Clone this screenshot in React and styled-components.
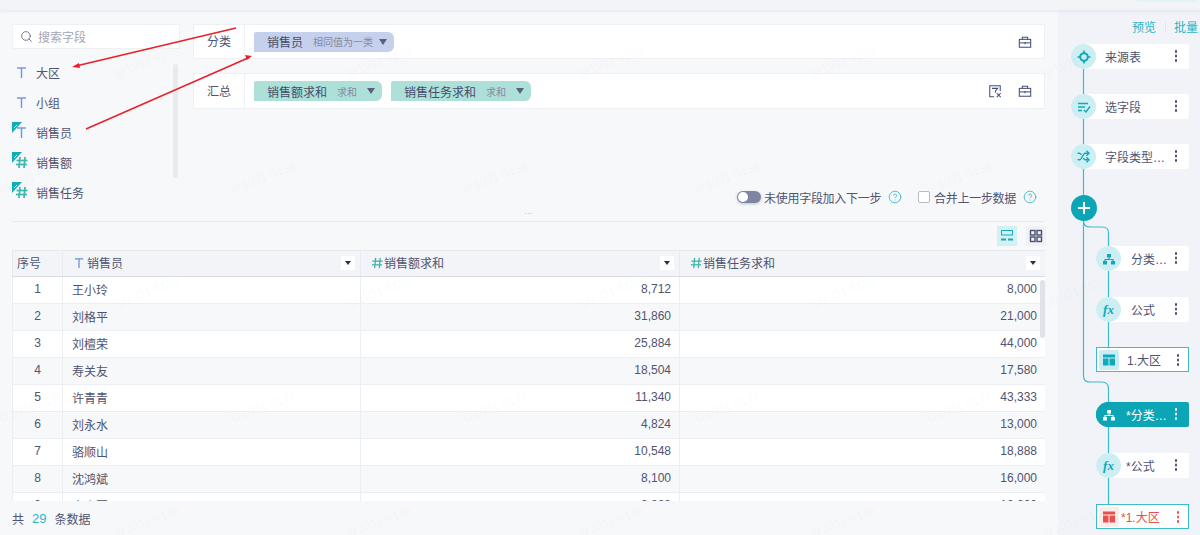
import React from "react";
import styled, { createGlobalStyle } from "styled-components";
import { Search, Shuffle, CircleHelp } from "lucide-react";

const rows = [
  ["王小玲", "8,712", "8,000"],
  ["刘格平", "31,860", "21,000"],
  ["刘檀荣", "25,884", "44,000"],
  ["寿关友", "18,504", "17,580"],
  ["许青青", "11,340", "43,333"],
  ["刘永水", "4,824", "13,000"],
  ["骆顺山", "10,548", "18,888"],
  ["沈鸿斌", "8,100", "16,000"],
  ["李小军", "9,260", "12,000"],
];

const watermarks = [];
[62, 177, 292, 407, 522].forEach((top, i) => {
  for (let k = 0; k < 6; k++) {
    const left = (i % 2 === 0 ? 147 : 31) + 232 * k;
    if (left < 1170) watermarks.push({ top, left });
  }
});

const TypeT = () => (
  <>
    <line x1="5" y1="6" x2="14" y2="6" />
    <line x1="9.5" y1="6" x2="9.5" y2="16" />
  </>
);

const TypeHash = () => (
  <>
    <line x1="8" y1="5" x2="7" y2="16" />
    <line x1="13" y1="5" x2="12" y2="16" />
    <line x1="4.5" y1="8.5" x2="15.5" y2="8.5" />
    <line x1="4" y1="12.5" x2="15" y2="12.5" />
  </>
);

const FieldIcon = ({ hash, marked }) => (
  <FieldSvg viewBox="0 0 18 20" $hash={hash}>
    {hash ? <TypeHash /> : <TypeT />}
    {marked && (
      <>
        <path d="M0 0H10L0 11Z" fill="#10aebb" stroke="none" />
        <line x1="2" y1="6" x2="5" y2="3" stroke="#fff" strokeWidth="1" />
      </>
    )}
  </FieldSvg>
);

const HeadIcon = ({ hash }) => (
  <HeadSvg viewBox="3 4 13 13" $hash={hash}>
    {hash ? <TypeHash /> : <TypeT />}
  </HeadSvg>
);

const BoxIcon = () => (
  <ActionSvg viewBox="0 0 16 16">
    <rect x="1.5" y="5" width="13" height="9" />
    <path d="M5 5V2.5H11V5" />
    <line x1="1.5" y1="9" x2="14.5" y2="9" />
    <line x1="8" y1="8" x2="8" y2="10.5" />
  </ActionSvg>
);

const FilterIcon = () => (
  <ActionSvg viewBox="0 0 16 16">
    <path d="M7 14.5H2V2H14V8" />
    <path d="M4.5 5H11L8.5 8V10" />
    <path d="M10 10.5L14.5 15M14.5 10.5L10 15" />
  </ActionSvg>
);

const SourceIcon = () => (
  <NodeSvg viewBox="0 0 14 14">
    <circle cx="7" cy="7" r="3.8" strokeWidth="2" />
    <path d="M7 0.5V3M7 11V13.5M0.5 7H3M11 7H13.5" strokeWidth="1.6" />
  </NodeSvg>
);

const PickIcon = () => (
  <NodeSvg viewBox="0 0 14 14">
    <path d="M1 3.5H11M1 7H8M1 10.5H5" strokeWidth="1.3" />
    <path d="M7 10L9 12L13 6.5" strokeWidth="1.4" />
  </NodeSvg>
);

const GroupIcon = ({ light }) => (
  <NodeSvg viewBox="0 0 14 14" $light={light}>
    <rect x="5" y="2" width="4" height="3.5" fill="currentColor" stroke="none" />
    <rect x="1" y="9" width="4" height="3.5" fill="currentColor" stroke="none" />
    <rect x="9" y="9" width="4" height="3.5" fill="currentColor" stroke="none" />
    <path d="M7 5.5V7.5M3 9V7.5H11V9" strokeWidth="1.1" />
  </NodeSvg>
);

const TableIcon = () => (
  <svg viewBox="0 0 14 14" width="14" height="14">
    <path d="M1 1.5H13V4.5H1ZM1 5.5H6.5V12.5H1ZM7.5 5.5H13V12.5H7.5Z" fill="currentColor" />
  </svg>
);

const Node = ({ icon, label, gap, nested, active, narrow }) => (
  <NodeRow $gap={gap} $nested={nested} $active={active}>
    <NodeCircle $active={active}>{icon}</NodeCircle>
    <NodeLabel $nested={nested} $active={active} $narrow={narrow}>
      {label}
    </NodeLabel>
    <MoreDots $active={active} />
  </NodeRow>
);

const ResultNode = ({ label, gap, red }) => (
  <ResultRow $gap={gap}>
    <ResultThumb $red={red}>
      <TableIcon />
    </ResultThumb>
    <ResultLabel $red={red}>{label}</ResultLabel>
    <MoreDots $red={red} $result />
  </ResultRow>
);

export default function App() {
  return (
    <Page>
      <GlobalStyle />
      <TopBar>
        <TopTab />
      </TopBar>
      <Main>
        <Editor>
          <TopArea>
            <FieldPane>
              <SearchBox>
                <Search size={13} strokeWidth={1.5} color="#5d6278" />
                <span>搜索字段</span>
              </SearchBox>
              <FieldList>
                <FieldRow><FieldIcon />大区</FieldRow>
                <FieldRow><FieldIcon />小组</FieldRow>
                <FieldRow><FieldIcon marked />销售员</FieldRow>
                <FieldRow><FieldIcon hash marked />销售额</FieldRow>
                <FieldRow><FieldIcon hash marked />销售任务</FieldRow>
                <FieldScroll />
              </FieldList>
            </FieldPane>
            <ConfigPane>
              <ConfigRow $short>
                <ConfigLabel>分类</ConfigLabel>
                <ConfigBody>
                  <Pill $blue>
                    销售员<PillSub>相同值为一类</PillSub>
                    <PillCaret $tight />
                  </Pill>
                </ConfigBody>
                <ConfigActions>
                  <BoxIcon />
                </ConfigActions>
              </ConfigRow>
              <ConfigRow>
                <ConfigLabel>汇总</ConfigLabel>
                <ConfigBody>
                  <Pill>
                    销售额求和<PillSub>求和</PillSub>
                    <PillCaret />
                  </Pill>
                  <Pill>
                    销售任务求和<PillSub>求和</PillSub>
                    <PillCaret />
                  </Pill>
                </ConfigBody>
                <ConfigActions>
                  <FilterIcon />
                  <BoxIcon />
                </ConfigActions>
              </ConfigRow>
              <Options>
                <Toggle />
                <OptionText>未使用字段加入下一步</OptionText>
                <HelpIcon size={14} strokeWidth={1.4} />
                <CheckBox />
                <OptionText>合并上一步数据</OptionText>
                <HelpIcon size={14} strokeWidth={1.4} />
              </Options>
            </ConfigPane>
          </TopArea>
          <Grip>···</Grip>
          <ViewBar>
            <ViewButton $active>
              <svg viewBox="0 0 14 14" width="14" height="14" fill="none" stroke="#10aebb">
                <rect x="1.5" y="1.5" width="11" height="4.5" />
                <path d="M1 10.5H6M8 10.5H13" strokeWidth="2" />
              </svg>
            </ViewButton>
            <ViewButton>
              <svg viewBox="0 0 14 14" width="14" height="14" fill="none" stroke="#4a5072" strokeWidth="1.4">
                <rect x="1.5" y="1.5" width="4.5" height="4.5" />
                <rect x="8" y="1.5" width="4.5" height="4.5" />
                <rect x="1.5" y="8" width="4.5" height="4.5" />
                <rect x="8" y="8" width="4.5" height="4.5" />
              </svg>
            </ViewButton>
          </ViewBar>
          <TableWrap>
            <DataTable>
              <colgroup>
                <col width="50" />
                <col width="298" />
                <col width="319" />
                <col width="366" />
              </colgroup>
              <thead>
                <tr>
                  <IndexHead>序号</IndexHead>
                  <HeadCell>
                    <HeadInner>
                      <HeadIcon />
                      销售员
                      <HeadMenu />
                    </HeadInner>
                  </HeadCell>
                  <HeadCell>
                    <HeadInner>
                      <HeadIcon hash />
                      销售额求和
                      <HeadMenu />
                    </HeadInner>
                  </HeadCell>
                  <HeadCell>
                    <HeadInner>
                      <HeadIcon hash />
                      销售任务求和
                      <HeadMenu />
                    </HeadInner>
                  </HeadCell>
                </tr>
              </thead>
              <tbody>
                {rows.map((row, i) => (
                  <BodyRow key={row[0]}>
                    <IndexCell>{i + 1}</IndexCell>
                    <TextCell>{row[0]}</TextCell>
                    <NumberCell>{row[1]}</NumberCell>
                    <NumberCell>{row[2]}</NumberCell>
                  </BodyRow>
                ))}
              </tbody>
            </DataTable>
            <TableScroll />
          </TableWrap>
          <Footer>
            共<Count>29</Count>条数据
          </Footer>
        </Editor>
        <FlowPanel>
          <FlowLines viewBox="1058 10 142 525">
            <path d="M1083.5 69V195M1083.5 221V376Q1083.5 382 1090 382H1102Q1108.5 382 1108.5 389V402" />
            <path d="M1083.5 221Q1083.5 227 1090 227H1102Q1108.5 227 1108.5 233V246" />
            <path d="M1108.5 271V347M1108.5 427V504" />
          </FlowLines>
          <FlowHead>
            <FlowLink>预览</FlowLink>
            <FlowSep />
            <FlowLink>批量</FlowLink>
          </FlowHead>
          <FlowList>
            <Node gap={0} icon={<SourceIcon />} label="来源表" />
            <Node icon={<PickIcon />} label="选字段" />
            <Node icon={<Shuffle size={13} strokeWidth={2.4} />} label="字段类型转换" />
            <PlusButton>
              <svg viewBox="0 0 14 14" width="14" height="14" stroke="#fff" strokeWidth="2">
                <path d="M7 1V13M1 7H13" />
              </svg>
            </PlusButton>
            <Node nested icon={<GroupIcon />} label="分类汇总" />
            <Node nested gap={26} icon={<FxMark>fx</FxMark>} label="公式" />
            <ResultNode label="1.大区" />
            <Node nested active gap={30} icon={<GroupIcon light />} label="*分类汇总" />
            <Node nested narrow gap={26} icon={<FxMark>fx</FxMark>} label="*公式" />
            <ResultNode red gap={26} label="*1.大区" />
          </FlowList>
        </FlowPanel>
      </Main>
      <Overlay viewBox="0 0 1200 535">
        <line x1="236" y1="28" x2="76" y2="66" />
        <path d="M72 67L79 63L80 68Z" fill="#e8202a" stroke="none" />
        <line x1="86" y1="129" x2="248" y2="58" />
        <path d="M252 56L245 55L247 60Z" fill="#e8202a" stroke="none" />
      </Overlay>
      {watermarks.map((w) => (
        <Watermark key={`${w.top}-${w.left}`} style={{ top: w.top, left: w.left }}>
          ljz1031 5138
        </Watermark>
      ))}
    </Page>
  );
}

const GlobalStyle = createGlobalStyle`
  html, body {
    margin: 0;
    padding: 0;
    background: #f7f8fa;
  }
  * {
    box-sizing: border-box;
  }
`;

const Page = styled.div`
  position: relative;
  width: 1200px;
  height: 535px;
  overflow: hidden;
  background: #f7f8fa;
  color: #4f5470;
  font-family: "Liberation Sans", "Noto Sans CJK SC", sans-serif;
  font-size: 12px;
`;

const TopBar = styled.div`
  position: relative;
  z-index: 2;
  display: flex;
  justify-content: flex-end;
  height: 10px;
  padding-right: 3px;
  background: #f3f4f8;
  box-shadow: 0 1px 4px rgba(90, 100, 130, 0.12);
`;

const TopTab = styled.div`
  width: 60px;
  height: 2px;
  background: #e0f3f6;
`;

const Main = styled.div`
  display: flex;
  height: 525px;
`;

const Editor = styled.div`
  display: flex;
  flex-direction: column;
  width: 1058px;
  padding: 14px 13px 0 12px;
`;

const TopArea = styled.div`
  display: flex;
  flex: none;
  gap: 13px;
  height: 186px;
`;

const FieldPane = styled.div`
  flex: 0 0 168px;
`;

const SearchBox = styled.div`
  display: flex;
  align-items: center;
  gap: 5px;
  height: 25px;
  padding-left: 7px;
  background: #fff;
  border: 1px solid #eef0f4;
  color: #a3a6b6;
`;

const FieldList = styled.div`
  position: relative;
  margin-top: 8px;
`;

const FieldRow = styled.div`
  display: flex;
  align-items: center;
  gap: 6px;
  height: 30px;
`;

const FieldSvg = styled.svg`
  flex: none;
  width: 18px;
  height: 20px;
  fill: none;
  stroke: ${({ $hash }) => ($hash ? "#3fb5ad" : "#6f94dc")};
  stroke-width: ${({ $hash }) => ($hash ? 1.7 : 1.4)};
`;

const FieldScroll = styled.div`
  position: absolute;
  top: 7px;
  right: 2px;
  width: 5px;
  height: 114px;
  border-radius: 3px;
  background: #e8eaee;
`;

const ConfigPane = styled.div`
  display: flex;
  flex: 1;
  flex-direction: column;
  gap: 14px;
`;

const ConfigRow = styled.div`
  display: flex;
  flex: none;
  align-items: stretch;
  height: ${({ $short }) => ($short ? 35 : 36)}px;
  background: #fff;
  border: 1px solid #eef0f4;
`;

const ConfigLabel = styled.div`
  display: flex;
  flex: 0 0 51px;
  align-items: center;
  justify-content: center;
  padding-bottom: 2px;
  border-right: 1px solid #eef0f4;
`;

const ConfigBody = styled.div`
  display: flex;
  flex: 1;
  gap: 9px;
  align-items: center;
  padding-left: 9px;
`;

const ConfigActions = styled.div`
  display: flex;
  gap: 16px;
  align-items: center;
  padding-right: 12px;
`;

const ActionSvg = styled.svg`
  width: 14px;
  height: 14px;
  fill: none;
  stroke: #46507c;
  stroke-width: 1.2;
`;

const Pill = styled.div`
  display: flex;
  align-items: center;
  height: 20px;
  padding: 0 7px 0 13px;
  border-radius: 2px 6px 6px 0;
  background: ${({ $blue }) => ($blue ? "#c5d0ec" : "#aee0da")};
  color: #454b68;
`;

const PillSub = styled.span`
  margin-left: 10px;
  color: #858a9e;
  font-size: 10px;
`;

const PillCaret = styled.i`
  width: 0;
  height: 0;
  margin-left: ${({ $tight }) => ($tight ? 6 : 10)}px;
  border-top: 6px solid #5a607e;
  border-right: 4.5px solid transparent;
  border-left: 4.5px solid transparent;
`;

const Options = styled.div`
  display: flex;
  flex: none;
  align-items: center;
  justify-content: flex-end;
  height: 20px;
  margin-top: auto;
  margin-bottom: 3px;
  padding-right: 8px;
`;

const Toggle = styled.div`
  position: relative;
  width: 24px;
  height: 12px;
  margin-right: 3px;
  border-radius: 6px;
  background: #7f84a0;
  box-shadow: 0 1px 3px rgba(80, 85, 110, 0.35);

  &::after {
    content: "";
    position: absolute;
    top: 1px;
    left: 1px;
    width: 10px;
    height: 10px;
    border-radius: 50%;
    background: #fff;
  }
`;

const OptionText = styled.span`
  margin-right: 7px;
  letter-spacing: -0.3px;
`;

const HelpIcon = styled(CircleHelp)`
  color: #2fb6c6;

  & + div {
    margin-left: 16px;
  }
`;

const CheckBox = styled.div`
  width: 12px;
  height: 12px;
  margin-right: 4px;
  border: 1px solid #b9bcca;
  border-radius: 2px;
  background: #fff;
`;

const Grip = styled.div`
  flex: none;
  height: 12px;
  border-bottom: 1px solid #e9ebf0;
  color: #a8abb9;
  font-size: 8px;
  line-height: 8px;
  text-align: center;
`;

const ViewBar = styled.div`
  display: flex;
  flex: none;
  gap: 9px;
  justify-content: flex-end;
  height: 28px;
  margin-right: -1px;
  padding-top: 4px;
`;

const ViewButton = styled.div`
  display: flex;
  align-items: center;
  justify-content: center;
  width: 20px;
  height: 20px;
  background: ${({ $active }) => ($active ? "#d5f0f3" : "#f0f1f5")};
`;

const TableWrap = styled.div`
  position: relative;
  flex: none;
  height: 251px;
  overflow: hidden;
`;

const DataTable = styled.table`
  width: 1033px;
  border-collapse: collapse;
  table-layout: fixed;
`;

const IndexHead = styled.th`
  height: 26px;
  padding: 0 0 2px 4px;
  border: 1px solid #e8eaef;
  border-bottom-color: #d9dce6;
  background: #f2f4f8;
  font-weight: 400;
  text-align: left;
`;

const HeadCell = styled(IndexHead)`
  padding: 0 0 2px;
`;

const HeadInner = styled.div`
  display: flex;
  align-items: center;
  justify-content: flex-start;
  padding: 0 5px 0 10px;
`;

const HeadSvg = styled.svg`
  width: 12px;
  height: 12px;
  margin-right: ${({ $hash }) => ($hash ? 1 : 2)}px;
  fill: none;
  stroke: ${({ $hash }) => ($hash ? "#3fb5ad" : "#6f94dc")};
  stroke-width: 1.4;
`;

const HeadMenu = styled.div`
  display: flex;
  align-items: center;
  justify-content: center;
  width: 14px;
  height: 14px;
  margin-left: auto;
  background: #fff;

  &::after {
    content: "";
    border-top: 4px solid #2a2f55;
    border-right: 3.5px solid transparent;
    border-left: 3.5px solid transparent;
  }
`;

const BodyRow = styled.tr`
  background: #fff;

  &:nth-child(even) {
    background: #f7f8fa;
  }
`;

const IndexCell = styled.td`
  height: 27px;
  padding: 0 0 2px;
  border: 1px solid #eceef3;
  text-align: center;
`;

const TextCell = styled(IndexCell)`
  padding-left: 9px;
  text-align: left;
`;

const NumberCell = styled(IndexCell)`
  padding-right: 8px;
  text-align: right;
`;

const TableScroll = styled.div`
  position: absolute;
  top: 30px;
  right: 0;
  width: 5px;
  height: 58px;
  border-radius: 3px;
  background: #e0e2e8;
`;

const Footer = styled.div`
  display: flex;
  flex: none;
  align-items: center;
  height: 34px;
`;

const Count = styled.span`
  margin: 0 8px 0 8px;
  color: #2fb6c6;
  font-size: 13px;
`;

const FlowPanel = styled.div`
  position: relative;
  flex: 1;
  background: #f1f3f8;
`;

const FlowLines = styled.svg`
  position: absolute;
  top: 0;
  left: 0;
  width: 142px;
  height: 525px;
  fill: none;
  stroke: #3dbccb;
  stroke-width: 1.2;
`;

const FlowHead = styled.div`
  display: flex;
  align-items: center;
  justify-content: flex-end;
  height: 33px;
  padding-right: 2px;
`;

const FlowLink = styled.span`
  color: #2fb3c4;
`;

const FlowSep = styled.i`
  width: 1px;
  height: 10px;
  margin: 0 8px 0 9px;
  background: #e2e5ec;
`;

const FlowList = styled.div`
  position: relative;
  display: flex;
  flex-direction: column;
  margin-top: 1px;
  padding: 0 11px 0 13px;
`;

const NodeRow = styled.div`
  position: relative;
  display: flex;
  flex: none;
  align-items: center;
  height: 25px;
  margin-top: ${({ $gap }) => ($gap === undefined ? 25 : $gap)}px;
  margin-left: ${({ $nested }) => ($nested ? 25 : 0)}px;
  border-radius: 13px 2px 2px 13px;
  background: ${({ $active }) => ($active ? "#0ba5b6" : "#fff")};
`;

const NodeCircle = styled.div`
  display: flex;
  flex: none;
  align-items: center;
  justify-content: center;
  width: 25px;
  height: 25px;
  border-radius: 50%;
  background: ${({ $active }) => ($active ? "#0ba5b6" : "#cdeef2")};
  color: #0fa9ba;
`;

const NodeSvg = styled.svg`
  width: 14px;
  height: 14px;
  fill: none;
  stroke: currentColor;
  color: ${({ $light }) => ($light ? "#fff" : "#0fa9ba")};
`;

const FxMark = styled.span`
  color: #0fa9ba;
  font-family: "Liberation Serif", serif;
  font-size: 13px;
  font-style: italic;
  font-weight: 700;
`;

const NodeLabel = styled.div`
  overflow: hidden;
  width: ${({ $nested, $active }) => ($active ? 41 : $nested ? 37 : 61)}px;
  margin-left: ${({ $nested, $active, $narrow }) =>
    $active || $narrow ? 5 : $nested ? 10 : 9}px;
  color: ${({ $active }) => ($active ? "#fff" : "#4f5470")};
  text-overflow: ellipsis;
  white-space: nowrap;
`;

const MoreDots = styled.i`
  position: absolute;
  top: 6px;
  right: ${({ $result }) => ($result ? 9 : 12)}px;
  width: 2.5px;
  height: 2.5px;
  border-radius: 50%;
  background: ${({ $active, $red }) => ($active ? "#fff" : $red ? "#e8504f" : "#4a4f6b")};
  box-shadow:
    0 4.5px 0 ${({ $active, $red }) => ($active ? "#fff" : $red ? "#e8504f" : "#4a4f6b")},
    0 9px 0 ${({ $active, $red }) => ($active ? "#fff" : $red ? "#e8504f" : "#4a4f6b")};
`;

const PlusButton = styled.div`
  display: flex;
  flex: none;
  align-items: center;
  justify-content: center;
  width: 26px;
  height: 26px;
  margin-top: 26px;
  border-radius: 50%;
  background: #0ba5b6;
`;

const ResultRow = styled.div`
  position: relative;
  display: flex;
  flex: none;
  align-items: center;
  height: 25px;
  margin-top: ${({ $gap }) => ($gap === undefined ? 25 : $gap)}px;
  margin-left: 25px;
  padding-left: 2px;
  border: 1px solid #3dbccb;
  background: #fff;
`;

const ResultThumb = styled.div`
  display: flex;
  flex: none;
  align-items: center;
  justify-content: center;
  width: 20px;
  height: 20px;
  border-radius: 2px;
  background: ${({ $red }) => ($red ? "#fdecec" : "#c9edf2")};
  color: ${({ $red }) => ($red ? "#e8504f" : "#0fa9ba")};
`;

const ResultLabel = styled.div`
  margin-left: ${({ $red }) => ($red ? 2 : 8)}px;
  color: ${({ $red }) => ($red ? "#e8504f" : "#4f5470")};
  white-space: nowrap;
`;

const Overlay = styled.svg`
  position: absolute;
  top: 0;
  left: 0;
  z-index: 3;
  width: 1200px;
  height: 535px;
  pointer-events: none;
  stroke: #e8202a;
  stroke-width: 1.5;
`;

const Watermark = styled.div`
  position: absolute;
  z-index: 4;
  color: rgba(90, 100, 130, 0.045);
  font-size: 12px;
  pointer-events: none;
  transform: translate(-50%, -50%) rotate(-20deg);
  white-space: nowrap;
`;
